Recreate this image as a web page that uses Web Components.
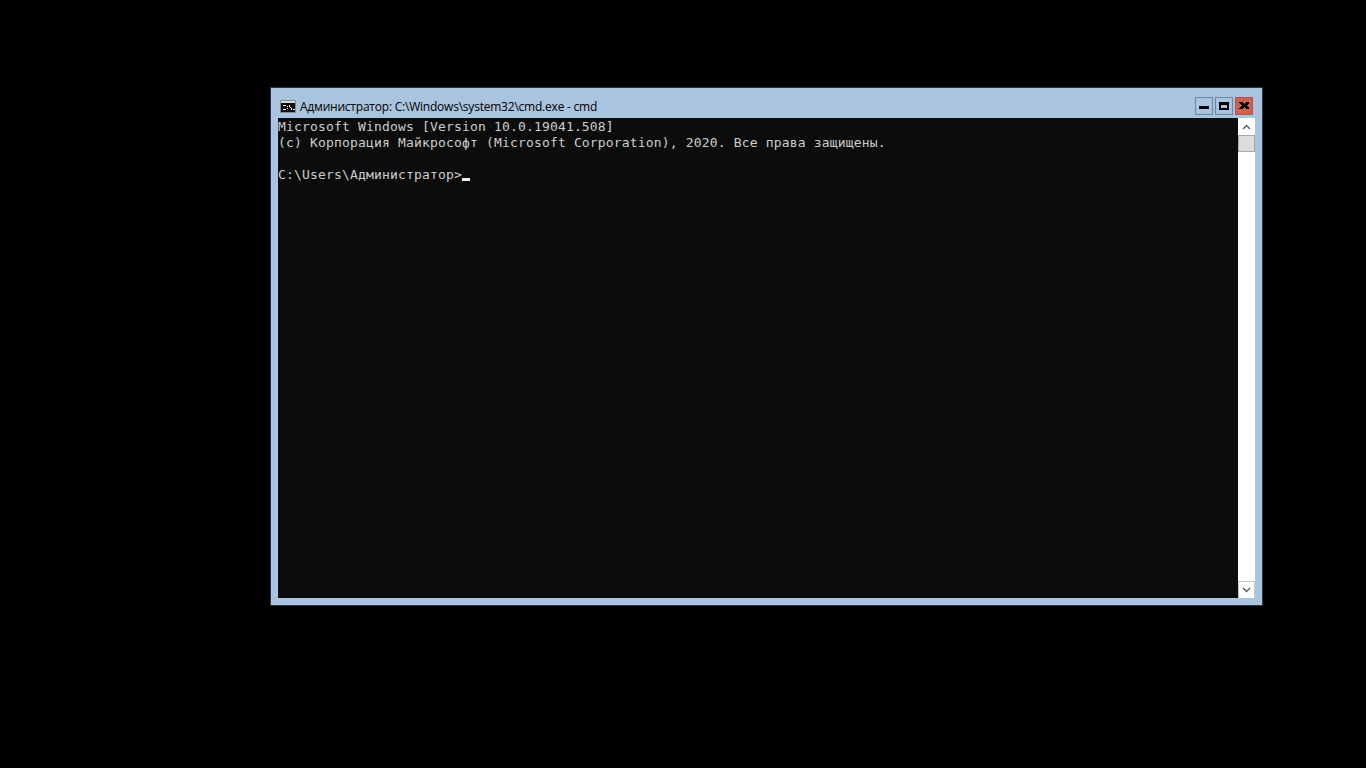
<!DOCTYPE html>
<html><head><meta charset="utf-8"><title>cmd</title>
<style>
html,body{margin:0;height:100%;background:#000;overflow:hidden}
body{display:block}
</style></head><body>
<rdp-desktop>
<cmd-window title-text="Администратор: C:\Windows\system32\cmd.exe - cmd">
<span>Microsoft Windows [Version 10.0.19041.508]</span>
<span>(c) Корпорация Майкрософт (Microsoft Corporation), 2020. Все права защищены.</span>
<span>&nbsp;</span>
<span>C:\Users\Администратор&gt;<console-caret></console-caret></span>
</cmd-window>
</rdp-desktop>
<script>
class RdpDesktop extends HTMLElement{constructor(){super();this.attachShadow({mode:'open'}).innerHTML=`<style>:host{display:block;position:relative;width:1366px;height:768px;background:#000}</style><slot></slot>`}}
class ConsoleCaret extends HTMLElement{constructor(){super();this.attachShadow({mode:'open'}).innerHTML=`<style>:host{display:inline-block;width:8px;height:3px;background:#f2f2f2;vertical-align:-2px}</style>`}}
class WinButton extends HTMLElement{constructor(){super();const k=this.getAttribute('kind');
const g={min:'<path d="M3 8h10v3H3z" fill="#000"/>',max:'<path d="M3 4h10v8H3z M5 6.500v3h6v-3z" fill="#000" fill-rule="evenodd"/>',close:'<path d="M3 4h3l2 2 2-2h3v1l-2.500 2.500L13 10v1h-3L8 9l-2 2H3v-1l2.500-2.500L3 5z" fill="#000"/>'}[k];
this.attachShadow({mode:'open'}).innerHTML=`<style>:host{display:flex;align-items:center;justify-content:center;width:18px;height:18px;box-sizing:border-box;border:1px solid ${k=='close'?'#b5574a':'#6c86a3'};background:${k=='close'?'#cc6150':'#a9c4de'}}svg{display:block;width:16px;height:16px}</style><svg viewBox="0 0 16 16" shape-rendering="crispEdges">${g}</svg>`}}
class ConsoleScrollbar extends HTMLElement{constructor(){super();this.attachShadow({mode:'open'}).innerHTML=`<style>:host{display:flex;flex-direction:column;width:17px;background:#fff}
.b{height:17px;display:flex;align-items:center;justify-content:center;background:#fff;box-sizing:border-box}
.t{height:17px;box-sizing:border-box;background:#dcdcdc;border:1px solid #a8a8a8}
.s{flex:1}svg{display:block}</style>
<div class="b"><svg width="9" height="6" viewBox="0 0 9 6"><path d="M1 5l3.500-3.500L8 5" fill="none" stroke="#606060" stroke-width="1.500"/></svg></div>
<div class="t"></div><div class="s"></div>
<div class="b" style="border:1px solid #c4c4c4;border-bottom:0"><svg width="9" height="6" viewBox="0 0 9 6"><path d="M1 1l3.500 3.500L8 1" fill="none" stroke="#606060" stroke-width="1.500"/></svg></div>`}}
class CmdWindow extends HTMLElement{constructor(){super();this.attachShadow({mode:'open'}).innerHTML=`<style>
:host{display:flex;flex-direction:column;position:absolute;left:270px;top:87px;width:993px;height:519px;box-sizing:border-box;background:#a9c4de;border:1px solid #2f353b;padding:0 7px 7px 7px}
.title{height:30px;display:flex;align-items:flex-start;flex:none}
.ico{width:16px;height:13px;margin:12px 0 0 2px;display:block;flex:none}
.txt{font:12px/16px "Open Sans","Noto Sans",sans-serif;letter-spacing:-.22px;color:#000;margin:11px 0 0 4px;white-space:pre;flex:1}
.btns{display:flex;gap:2px;margin:9px 2px 0 0}
.body{display:flex;flex:1;min-height:0}
.con{width:960px;height:480px;box-sizing:border-box;padding-top:1px;background:#0c0c0c;color:#ccc;font:13px/16px "DejaVu Sans Mono",monospace;letter-spacing:.17px;display:flex;flex-direction:column;white-space:pre}
::slotted(span){display:block;height:16px}
</style>
<div class="title"><svg class="ico" viewBox="0 0 16 13" shape-rendering="crispEdges"><rect width="16" height="13" fill="#8a8a8a"/><rect x="1" y="1" width="14" height="2" fill="#d8d8d8"/><rect x="1" y="3" width="14" height="9" fill="#0c0c0c"/><path d="M3 5h3v1H3v3h3v1H3zM7 6h1v1H7zM7 8h1v1H7zM9 5h1v2h1v1h1v2h-1V8h-1V7H9zM13 9h2v1h-2z" fill="#fff"/></svg><div class="txt"></div><div class="btns"><win-button kind="min"></win-button><win-button kind="max"></win-button><win-button kind="close"></win-button></div></div>
<div class="body"><div class="con"><slot></slot></div><console-scrollbar></console-scrollbar></div>`;
this.shadowRoot.querySelector('.txt').textContent=this.getAttribute('title-text')}}
customElements.define('rdp-desktop',RdpDesktop);customElements.define('console-caret',ConsoleCaret);customElements.define('win-button',WinButton);customElements.define('console-scrollbar',ConsoleScrollbar);customElements.define('cmd-window',CmdWindow);
</script></body></html>
